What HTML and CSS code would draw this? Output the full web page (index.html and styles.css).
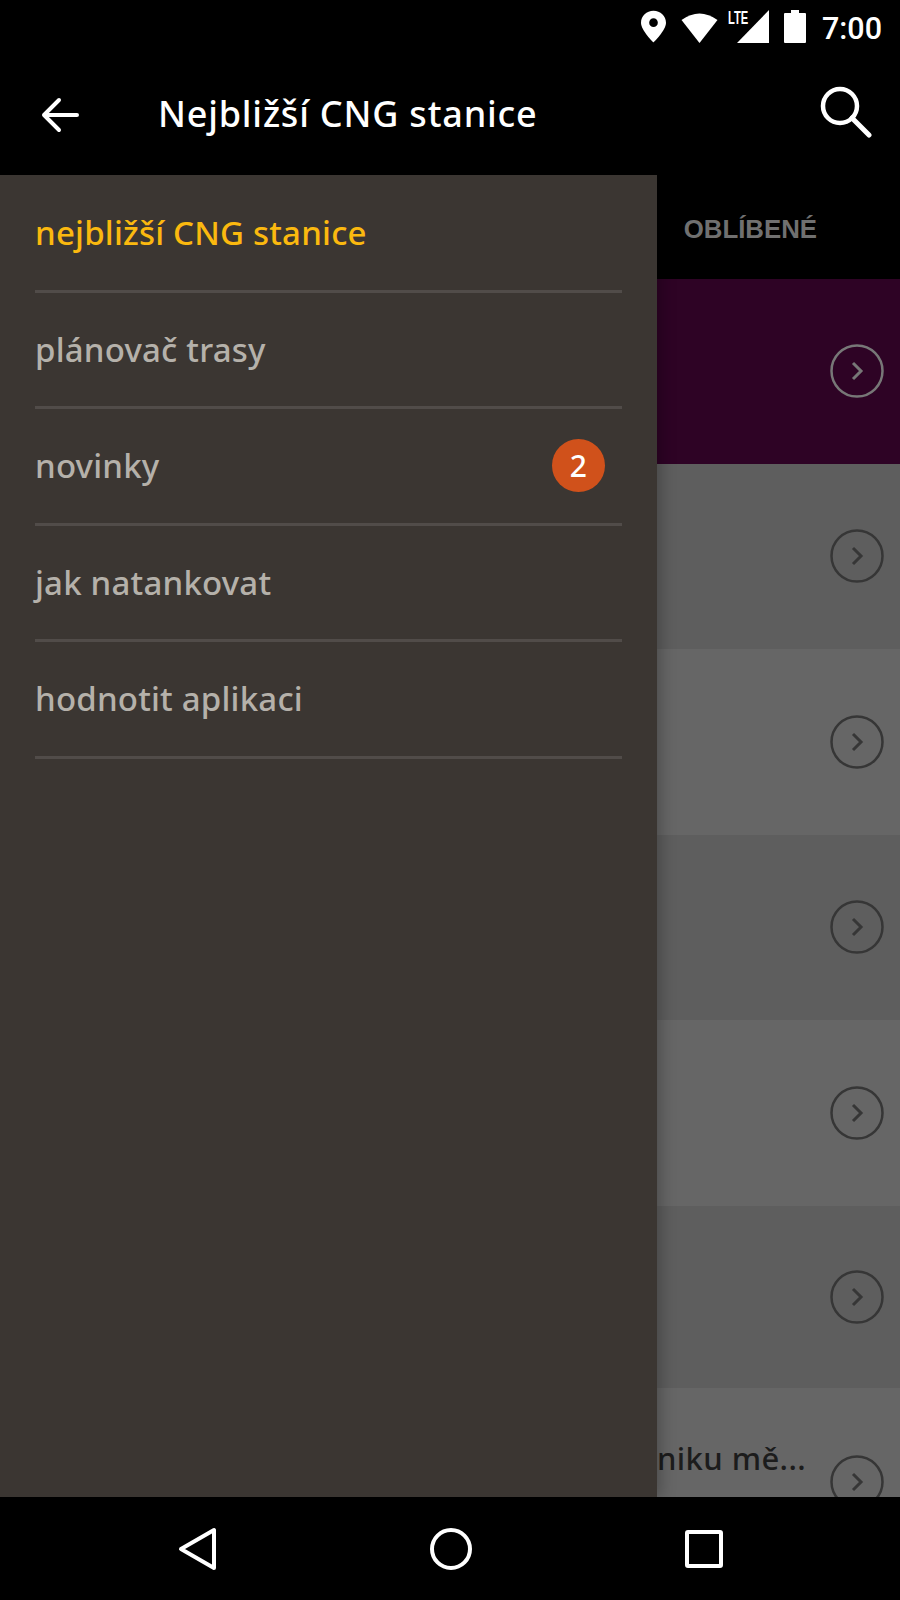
FILE: index.html
```html
<!DOCTYPE html>
<html lang="en">
<head>
    <meta charset="UTF-8">
    <title>Nejbližší CNG stanice</title>
    <link rel="stylesheet" href="styles.css">
</head>
<body>
    <div class="phone">
        <!-- Status bar -->
        <div class="status-bar">
            <svg class="st-pin" width="25" height="33" viewBox="0 0 26 33"><path fill="#fff" fill-rule="evenodd" d="M13 0C5.800 0 0 5.500 0 12.500 0 20.500 13 33 13 33S26 20.500 26 12.500C26 5.500 20.200 0 13 0ZM13 8a4.500 4.500 0 1 1 0 9 4.500 4.500 0 0 1 0-9Z"/></svg>
            <svg class="st-wifi" width="37" height="32" viewBox="0 0 37 32"><path fill="#fff" d="M18.500 32 .5 9Q18.500-4 36.500 9Z"/></svg>
            <div class="st-signal">
                <span class="st-lte">LTE</span>
                <svg width="32" height="33" viewBox="0 0 32 33"><path fill="#fff" d="M32 0v33H0Z"/></svg>
            </div>
            <svg class="st-batt" width="22" height="33" viewBox="0 0 22 33"><path fill="#fff" d="M7 0h8v3h6a1 1 0 0 1 1 1v28a1 1 0 0 1-1 1H1a1 1 0 0 1-1-1V4a1 1 0 0 1 1-1h6Z"/></svg>
            <span class="st-time">7:00</span>
        </div>

        <!-- App bar -->
        <div class="app-bar">
            <svg class="back-arrow" width="38" height="36" viewBox="0 0 38 36"><path fill="none" stroke="#fff" stroke-width="4" stroke-linecap="round" stroke-linejoin="round" d="M36 18H3M18 3 3 18l15 15"/></svg>
            <h1 class="app-title">Nejbližší CNG stanice</h1>
            <svg class="search-icon" width="52" height="52" viewBox="0 0 52 52"><circle cx="20" cy="20" r="17" fill="none" stroke="#fff" stroke-width="4.500"/><path fill="none" stroke="#fff" stroke-width="5" stroke-linecap="round" d="M32 32l17 17"/></svg>
        </div>

        <div class="main">
            <!-- List behind the drawer -->
            <div class="behind">
                <div class="tabs"><span class="tab-label">OBLÍBENÉ</span></div>
                <div class="row row-active"><svg class="go"><use href="#go-icon"/></svg></div>
                <div class="row"><svg class="go"><use href="#go-icon"/></svg></div>
                <div class="row row-light"><svg class="go"><use href="#go-icon"/></svg></div>
                <div class="row"><svg class="go"><use href="#go-icon"/></svg></div>
                <div class="row row-light"><svg class="go"><use href="#go-icon"/></svg></div>
                <div class="row row-short"><svg class="go"><use href="#go-icon"/></svg></div>
                <div class="row row-light row-last">
                    <span class="row-text">niku mě...</span>
                    <svg class="go"><use href="#go-icon"/></svg>
                </div>
            </div>

            <!-- Drawer -->
            <nav class="drawer">
                <a class="menu-item menu-item-active">nejbližší CNG stanice</a>
                <a class="menu-item">plánovač trasy</a>
                <a class="menu-item">novinky <span class="badge">2</span></a>
                <a class="menu-item">jak natankovat</a>
                <a class="menu-item">hodnotit aplikaci</a>
            </nav>
        </div>

        <!-- Navigation bar -->
        <div class="nav-bar">
            <svg width="40" height="44" viewBox="0 0 40 44"><path fill="none" stroke="#fff" stroke-width="4" stroke-linejoin="round" d="M36 3v38L3 22Z"/></svg>
            <svg width="44" height="44" viewBox="0 0 44 44"><circle cx="21" cy="22" r="19" fill="none" stroke="#fff" stroke-width="4"/></svg>
            <svg width="38" height="38" viewBox="0 0 38 38"><rect x="2" y="2" width="34" height="34" rx="1" fill="none" stroke="#fff" stroke-width="4"/></svg>
        </div>
    </div>

    <svg width="0" height="0" class="defs">
        <symbol id="go-icon" viewBox="0 0 54 54">
            <circle cx="27" cy="27" r="25.500" fill="none" stroke="currentColor" stroke-width="2.500"/>
            <path fill="none" stroke="currentColor" stroke-width="3" d="M23 19l8 8-8 8"/>
        </symbol>
    </svg>
</body>
</html>
```

FILE: styles.css
```css
body {
    margin: 0;
    background: #000;
    font-family: "Noto Sans", sans-serif;
}

.defs {
    display: block;
    height: 0;
}

.phone {
    width: 900px;
    height: 1600px;
    display: flex;
    flex-direction: column;
    overflow: hidden;
    background: #000;
}

/* Status bar */
.status-bar {
    height: 56px;
    display: flex;
    align-items: center;
    justify-content: flex-end;
    padding: 0 18px 3px 0;
    box-sizing: border-box;
    flex-shrink: 0;
}

.st-pin {
    margin-right: 15px;
}

.st-wifi {
    margin-right: 10px;
}

.st-signal {
    display: flex;
    align-items: flex-end;
    position: relative;
    width: 41px;
    height: 33px;
    justify-content: flex-end;
    margin-right: 15px;
}

.st-lte {
    position: absolute;
    left: 0;
    top: -1px;
    font-family: "Liberation Sans", sans-serif;
    font-size: 18px;
    line-height: 18px;
    font-weight: bold;
    color: #fff;
    transform: scaleX(0.62);
    transform-origin: left top;
}

.st-batt {
    margin-right: 16px;
}

.st-time {
    color: #fff;
    font-family: Roboto, sans-serif;
    font-size: 30.500px;
    font-weight: 500;
    line-height: 34px;
    margin-top: 4px;
}

/* App bar */
.app-bar {
    height: 119px;
    display: flex;
    align-items: center;
    padding: 0 28px 0 41px;
    flex-shrink: 0;
}

.back-arrow {
    flex-shrink: 0;
    margin-bottom: 2px;
}

.app-title {
    margin: 0 0 4px 79px;
    flex: 1;
    color: #fff;
    font-size: 36px;
    font-weight: 500;
    letter-spacing: 0.8px;
}

.search-icon {
    flex-shrink: 0;
    margin-bottom: 7px;
}

.main {
    flex: 1;
    display: flex;
    position: relative;
    min-height: 0;
}

/* List behind */
.behind {
    position: absolute;
    inset: 0;
    display: flex;
    flex-direction: column;
}

.tabs {
    height: 104px;
    flex-shrink: 0;
    display: flex;
    align-items: center;
    justify-content: flex-end;
    padding: 4px 83px 0 0;
    box-sizing: border-box;
}

.tab-label {
    color: #707070;
    font-family: "Liberation Sans", sans-serif;
    font-size: 25.800px;
    font-weight: bold;
}

.row {
    height: 185.500px;
    flex-shrink: 0;
    background: #5e5e5e;
    color: #363636;
    display: flex;
    align-items: center;
    justify-content: flex-end;
    padding-right: 16px;
    box-sizing: border-box;
    position: relative;
}

.row-light {
    background: #666;
}

.row-active {
    height: 184.500px;
    background: #2e0325;
    color: #777;
}

.row-short {
    height: 182px;
}

.row-last {
    height: 109px;
    align-items: flex-start;
    padding-top: 67px;
}

.row-text {
    position: absolute;
    left: 657px;
    top: 49px;
    color: #1c1c1c;
    font-size: 31px;
    font-weight: 500;
    letter-spacing: 0.4px;
}

.go {
    width: 54px;
    height: 54px;
}

/* Drawer */
.drawer {
    position: relative;
    width: 657px;
    background: #3b3632;
    box-shadow: 4px 0 14px rgba(0, 0, 0, 0.25);
    box-sizing: border-box;
    padding: 1px 35px 0;
}

.menu-item {
    height: 116.500px;
    border-bottom: 3px solid #514c49;
    box-sizing: border-box;
    display: flex;
    align-items: center;
    justify-content: space-between;
    padding: 0 17px 0 0;
    color: #b5b1aa;
    font-size: 33px;
    font-weight: 500;
    letter-spacing: 0.2px;
}

.menu-item-active {
    color: #fbb90f;
}

.badge {
    width: 53px;
    height: 53px;
    border-radius: 50%;
    background: #d0511b;
    color: #fff;
    display: flex;
    align-items: center;
    justify-content: center;
    font-size: 30px;
}

/* Navigation bar */
.nav-bar {
    height: 103px;
    flex-shrink: 0;
    display: flex;
    align-items: center;
    justify-content: space-between;
    padding: 0 177px 0 178px;
    box-sizing: border-box;
    background: #000;
    position: relative;
}
```
